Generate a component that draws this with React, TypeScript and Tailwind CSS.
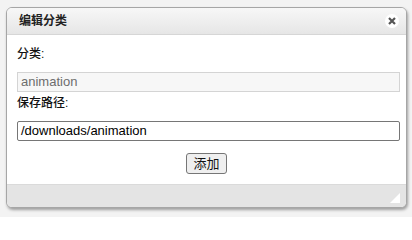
import React from "react";

const font = { fontFamily: '"Liberation Sans", "Noto Sans CJK SC", Arial, sans-serif' };

export default function App() {
  return (
    <div className="w-[412px] h-[217px] bg-[#f3f3f3] pt-[7px] pl-[6px]" style={font}>
      <div className="w-[401px] h-[201px] border border-[#a6a6a6] rounded-[6px] bg-white flex flex-col overflow-hidden shadow-[1px_2px_3px_rgba(0,0,0,0.35)]">
        <div className="h-[27px] shrink-0 flex items-center justify-between pl-[12px] pr-[7px] bg-gradient-to-b from-[#f7f7f7] to-[#e6e6e6] border-b border-[#d6d6d6]">
          <span className="text-[12px] font-bold text-[#222]">编辑分类</span>
          <span className="w-[14px] h-[14px] rounded-full bg-white flex items-center justify-center">
            <svg width="8" height="8" viewBox="0 0 8 8">
              <path d="M1 1L7 7M7 1L1 7" stroke="#555" strokeWidth="2.2" strokeLinecap="butt" />
            </svg>
          </span>
        </div>
        <div className="flex-1 flex flex-col pl-[10px] pr-[6px] pt-[11px]">
          <div className="text-[12px] leading-[16px] text-[#111] font-medium">分类:</div>
          <div className="mt-[10px] h-[20px] border border-[#d4d4d4] bg-[#f7f7f7] text-[13px] text-[#6d6d6d] leading-[18px] px-[3px]">
            animation
          </div>
          <div className="mt-[3px] text-[12px] leading-[16px] text-[#111] font-medium">保存路径:</div>
          <div className="mt-[10px] h-[20px] border border-[#767676] rounded-[2px] bg-white text-[13px] text-black leading-[18px] px-[3px]">
            /downloads/animation
          </div>
          <div className="mt-[12px] flex justify-center pr-[4px]">
            <button className="h-[21px] w-[41px] border border-[#767676] rounded-[3px] bg-[#efefef] text-[13px] text-[#111] leading-[19px] p-0">
              添加
            </button>
          </div>
        </div>
        <div className="h-[23px] shrink-0 bg-[#e4e4e4] border-t border-[#dadada] flex items-end justify-end pr-[6px] pb-[4px]">
          <svg width="10" height="10" viewBox="0 0 10 10">
            <path d="M10 0L10 10L0 10Z" fill="#fff" />
          </svg>
        </div>
      </div>
    </div>
  );
}
